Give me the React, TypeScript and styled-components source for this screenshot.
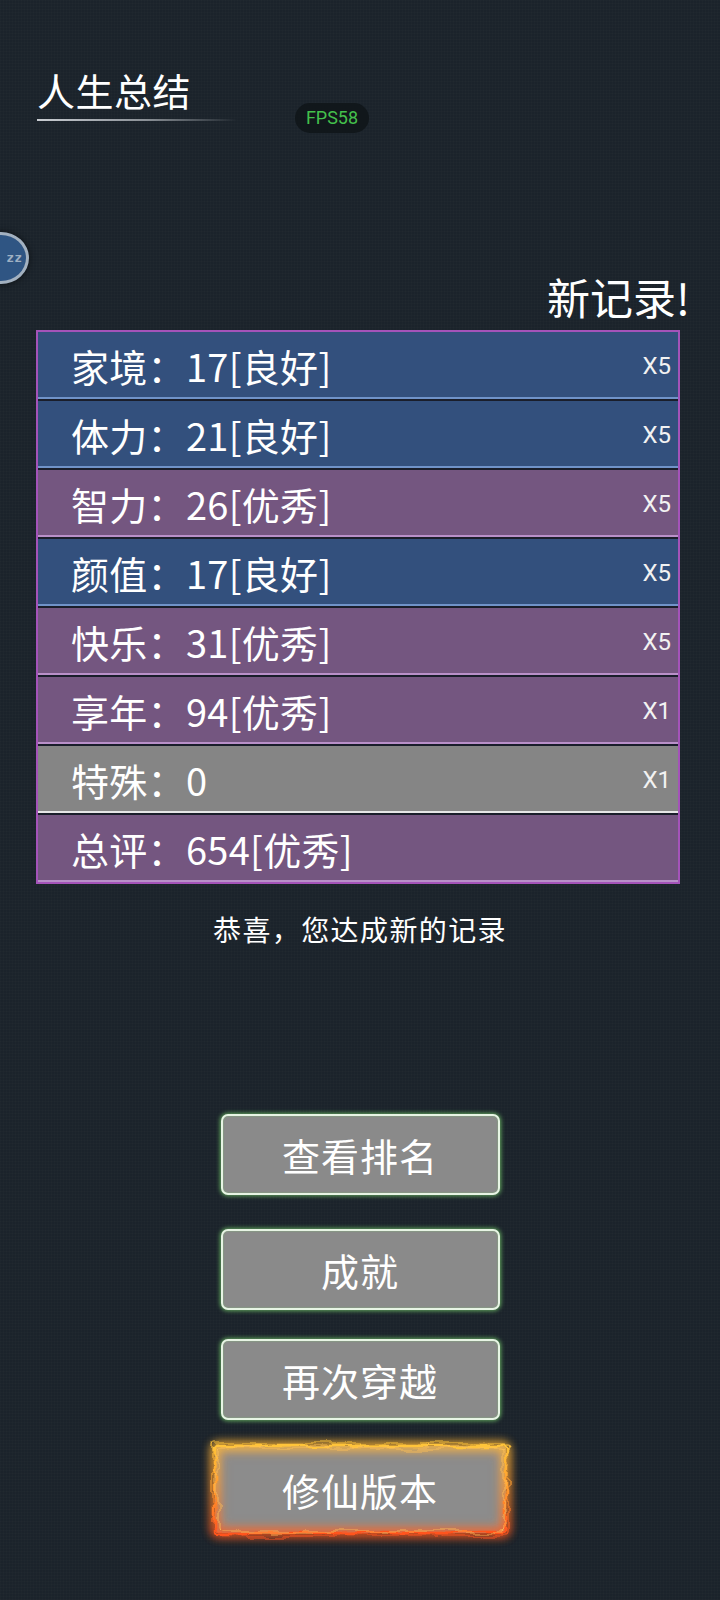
import React from "react";
import styled, { createGlobalStyle } from "styled-components";

const GlobalStyle = createGlobalStyle`
  html, body {
    margin: 0;
    padding: 0;
    background: #1b232b;
  }
  body {
    font-family: "Noto Sans CJK SC", "Noto Sans", sans-serif;
    color: #ffffff;
  }
  #root {
    min-height: 1600px;
  }
`;

const Page = styled.div`
  position: relative;
  width: 720px;
  min-height: 1600px;
  overflow: hidden;
  background-color: #1b232b;
  background-image:
    repeating-linear-gradient(0deg, rgba(255,255,255,0.012) 0 1px, transparent 1px 3px),
    repeating-linear-gradient(90deg, rgba(255,255,255,0.012) 0 1px, transparent 1px 3px);
  display: flex;
  flex-direction: column;
`;

const Header = styled.header`
  padding: 67px 0 0 37px;
  display: flex;
  flex-direction: column;
  align-items: flex-start;
`;

const Title = styled.h1`
  margin: 0;
  font-size: 38px;
  line-height: 46px;
  font-weight: 400;
  letter-spacing: 0.5px;
  color: #ffffff;
`;

const TitleRule = styled.div`
  margin-top: 6px;
  width: 200px;
  height: 2px;
  background: linear-gradient(90deg, #c9cdd2 0%, #8a9096 55%, rgba(138,144,150,0) 100%);
`;

const FpsBadge = styled.div`
  position: absolute;
  left: 295px;
  top: 103px;
  width: 74px;
  height: 30px;
  border-radius: 15px;
  background: #11171b;
  color: #44c04c;
  font-family: Roboto, "Liberation Sans", sans-serif;
  font-size: 18px;
  line-height: 30px;
  text-align: center;
`;

const SleepBubble = styled.div`
  position: absolute;
  left: -27px;
  top: 232px;
  width: 46px;
  height: 46px;
  border-radius: 50%;
  background: #2f5583;
  border: 3px solid #a3b1c0;
  box-shadow: 0 0 6px rgba(0, 0, 0, 0.6);
  color: #9fb0c3;
  font-family: "DejaVu Sans Mono", monospace;
  font-size: 13px;
  font-weight: 700;
  line-height: 46px;
  text-align: right;
  padding-right: 4px;
  box-sizing: content-box;
`;

const RecordLabel = styled.div`
  margin: 150px 30px 0 0;
  align-self: flex-end;
  font-size: 43px;
  line-height: 51px;
  color: #ffffff;
`;

const Table = styled.div`
  margin: 8px 0 0 36px;
  width: 644px;
  box-sizing: border-box;
  border: 2px solid #a453b9;
  background: #1a1e2b;
  display: flex;
  flex-direction: column;
  gap: 2px;
`;

type Tone = "blue" | "purple" | "gray";

const toneBg: Record<Tone, string> = {
  blue: "#33507d",
  purple: "#745680",
  gray: "#858585",
};
const toneLine: Record<Tone, string> = {
  blue: "#7093c9",
  purple: "#b990c9",
  gray: "#e6e6e6",
};

const Row = styled.div<{ $tone: Tone }>`
  height: 67px;
  display: flex;
  align-items: center;
  justify-content: space-between;
  padding: 0 7px 0 33px;
  background: ${(p) => toneBg[p.$tone]};
  box-shadow: inset 0 -2px 0 ${(p) => toneLine[p.$tone]};
`;

const RowLabel = styled.span`
  font-size: 38px;
  line-height: 44px;
  letter-spacing: 0.3px;
  color: #ffffff;
  white-space: nowrap;
`;

const Multiplier = styled.span`
  font-family: Roboto, "Liberation Sans", sans-serif;
  font-size: 24px;
  color: #f2f2f2;
`;

const Message = styled.p`
  margin: 25px 0 0;
  text-align: center;
  font-size: 28px;
  line-height: 40px;
  letter-spacing: 1.4px;
  color: #ffffff;
`;

const Actions = styled.div`
  margin-top: 165px;
  display: flex;
  flex-direction: column;
  align-items: center;
`;

const Button = styled.button<{ $gap: number }>`
  margin-top: ${(p) => p.$gap}px;
  width: 279px;
  height: 81px;
  border-radius: 7px;
  border: 2px solid #e7f4e4;
  background: #8a8a8a;
  box-shadow: 0 0 4px 1px rgba(120, 210, 110, 0.75), inset 0 0 2px rgba(120, 210, 110, 0.6);
  color: #ffffff;
  font-family: "Noto Sans CJK SC", sans-serif;
  font-size: 38px;
  letter-spacing: 1px;
  display: flex;
  align-items: center;
  justify-content: center;
  padding: 0;
  cursor: pointer;
`;

const FireButton = styled.button<{ $gap: number }>`
  position: relative;
  margin-top: ${(p) => p.$gap}px;
  width: 291px;
  height: 87px;
  border: none;
  border-radius: 3px;
  background: #8c8c8c;
  box-shadow: 0 0 12px 2px rgba(255, 120, 30, 0.45), inset 0 0 14px 3px rgba(255, 140, 60, 0.5);
  color: #ffffff;
  font-family: "Noto Sans CJK SC", sans-serif;
  font-size: 38px;
  letter-spacing: 1px;
  display: flex;
  align-items: center;
  justify-content: center;
  padding: 0;
  cursor: pointer;
`;

const FireFrame = styled.svg`
  position: absolute;
  left: -16px;
  top: -16px;
  width: 323px;
  height: 119px;
  pointer-events: none;
  overflow: visible;
`;

const FireLabel = styled.span`
  position: relative;
`;

const stats: { label: string; tone: Tone; mult?: string }[] = [
  { label: "家境：17[良好]", tone: "blue", mult: "X5" },
  { label: "体力：21[良好]", tone: "blue", mult: "X5" },
  { label: "智力：26[优秀]", tone: "purple", mult: "X5" },
  { label: "颜值：17[良好]", tone: "blue", mult: "X5" },
  { label: "快乐：31[优秀]", tone: "purple", mult: "X5" },
  { label: "享年：94[优秀]", tone: "purple", mult: "X1" },
  { label: "特殊：0", tone: "gray", mult: "X1" },
  { label: "总评：654[优秀]", tone: "purple" },
];

const Fire = () => (
  <FireFrame viewBox="0 0 323 119" aria-hidden="true">
    <defs>
      <linearGradient id="fireGrad" x1="0" y1="0" x2="0" y2="1">
        <stop offset="0" stopColor="#ffc43a" />
        <stop offset="0.5" stopColor="#ff9a2e" />
        <stop offset="1" stopColor="#ff531e" />
      </linearGradient>
      <filter id="flameA" x="-10%" y="-30%" width="120%" height="160%">
        <feTurbulence type="fractalNoise" baseFrequency="0.05 0.09" numOctaves="2" seed="4" />
        <feDisplacementMap in="SourceGraphic" scale="8" xChannelSelector="R" yChannelSelector="G" />
      </filter>
      <filter id="flameB" x="-10%" y="-30%" width="120%" height="160%">
        <feTurbulence type="fractalNoise" baseFrequency="0.03 0.06" numOctaves="3" seed="11" />
        <feDisplacementMap in="SourceGraphic" scale="14" xChannelSelector="G" yChannelSelector="R" />
      </filter>
      <filter id="fireGlow" x="-20%" y="-40%" width="140%" height="180%">
        <feGaussianBlur stdDeviation="4" />
      </filter>
    </defs>
    <rect x="16" y="16" width="291" height="87" rx="3" fill="none" stroke="url(#fireGrad)" strokeWidth="10" opacity="0.7" filter="url(#fireGlow)" />
    <rect x="16" y="16" width="291" height="87" rx="3" fill="none" stroke="url(#fireGrad)" strokeWidth="2.5" filter="url(#flameA)" />
    <rect x="14" y="14" width="295" height="91" rx="3" fill="none" stroke="url(#fireGrad)" strokeWidth="1.2" opacity="0.9" filter="url(#flameB)" />
    <rect x="18" y="18" width="287" height="83" rx="3" fill="none" stroke="#ffc15a" strokeWidth="1" opacity="0.8" filter="url(#flameB)" />
  </FireFrame>
);

export default function App() {
  return (
    <>
      <GlobalStyle />
      <Page>
        <Header>
          <Title>人生总结</Title>
          <TitleRule />
        </Header>
        <FpsBadge>FPS58</FpsBadge>
        <SleepBubble>zz</SleepBubble>
        <RecordLabel>新记录!</RecordLabel>
        <Table>
          {stats.map((s) => (
            <Row key={s.label} $tone={s.tone}>
              <RowLabel>{s.label}</RowLabel>
              {s.mult && <Multiplier>{s.mult}</Multiplier>}
            </Row>
          ))}
        </Table>
        <Message>恭喜，您达成新的记录</Message>
        <Actions>
          <Button $gap={0}>查看排名</Button>
          <Button $gap={34}>成就</Button>
          <Button $gap={29}>再次穿越</Button>
          <FireButton $gap={26}>
            <Fire />
            <FireLabel>修仙版本</FireLabel>
          </FireButton>
        </Actions>
      </Page>
    </>
  );
}
